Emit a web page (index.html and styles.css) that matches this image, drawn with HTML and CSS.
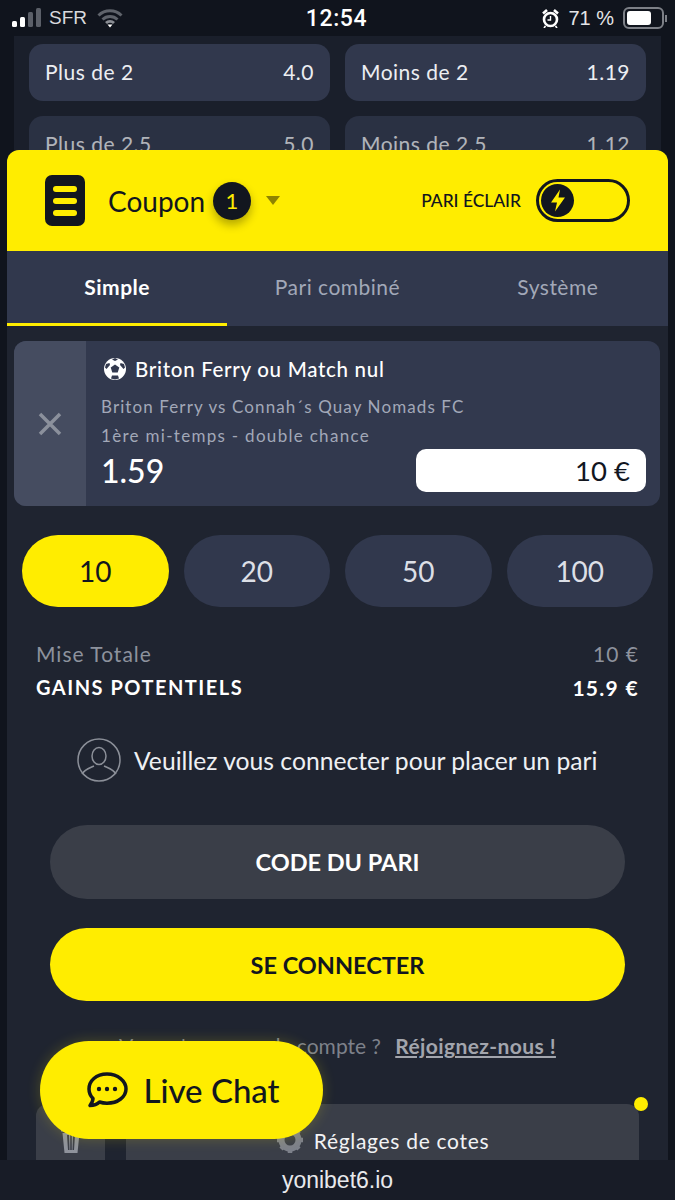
FILE: index.html
```html
<!DOCTYPE html>
<html lang="fr">
    <head>
        <meta charset="utf-8">
        <meta name="viewport" content="width=device-width, initial-scale=1">
        <title>Coupon</title>
        <link rel="stylesheet" href="styles.css">
    </head>
    <body>
        <div class="statusbar">
            <div class="status-left">
                <svg width="32" height="20" viewBox="0 0 32 20">
                    <rect x="2" y="13" width="5" height="6" rx="1.5" fill="#fff"/>
                    <rect x="10" y="9" width="5" height="10" rx="1.5" fill="#fff"/>
                    <rect x="18" y="4" width="5" height="15" rx="1.5" fill="#5b5f68"/>
                    <rect x="26" y="0" width="5" height="19" rx="1.5" fill="#5b5f68"/>
                </svg>
                <span class="carrier">SFR</span>
                <svg class="wifi" width="26" height="20" viewBox="0 0 26 20" fill="none" stroke="#5f636b" stroke-width="3">
                    <path d="M1.5 7.5a16.5 16.5 0 0 1 23 0"/>
                    <path d="M5.5 11.5a11 11 0 0 1 15 0"/>
                    <path d="M9 15a6 6 0 0 1 8 0" stroke="#8a8d94"/>
                    <path d="M10.5 16.5L13 19.5l2.5-3z" fill="#fff" stroke="none"/>
                </svg>
            </div>
            <div class="status-time">12:54</div>
            <div class="status-right">
                <svg width="17" height="19" viewBox="0 0 17 19">
                    <circle cx="8.5" cy="10.5" r="6.5" fill="none" stroke="#fff" stroke-width="2.6"/>
                    <path d="M8.5 7v4H5.5" fill="none" stroke="#fff" stroke-width="1.4"/>
                    <path d="M1 4.5L5 1M16 4.5L12 1" stroke="#fff" stroke-width="2.6"/>
                    <path d="M3.5 17l-1.5 2M13.5 17l1.5 2" stroke="#fff" stroke-width="1.6"/>
                </svg>
                <span class="battery-pct">71 %</span>
                <div class="battery"><div class="battery-fill"></div></div>
                <div class="battery-cap"></div>
            </div>
        </div>

        <div class="page">
            <div class="odds-row">
                <div class="odd"><span>Plus de 2</span><span>4.0</span></div>
                <div class="odd"><span>Moins de 2</span><span>1.19</span></div>
            </div>
            <div class="odds-row dim">
                <div class="odd"><span>Plus de 2.5</span><span>5.0</span></div>
                <div class="odd"><span>Moins de 2.5</span><span>1.12</span></div>
            </div>
        </div>

        <div class="coupon">
            <div class="coupon-head">
                <div class="coupon-icon"><i></i><i></i><i></i></div>
                <div class="coupon-title">Coupon</div>
                <div class="coupon-count">1</div>
                <div class="coupon-caret"></div>
                <div class="flash-label">PARI ÉCLAIR</div>
                <div class="flash-toggle">
                    <div class="flash-knob">
                        <svg width="16" height="25" viewBox="0 0 16 24"><path d="M10 1L1 14h6l-2 9 10-14H8.5z" fill="#ffed00"/></svg>
                    </div>
                </div>
            </div>

            <div class="tabs">
                <div class="tab active">Simple</div>
                <div class="tab">Pari combiné</div>
                <div class="tab">Système</div>
            </div>

            <div class="bet">
                <div class="bet-close">
                    <svg width="26" height="26" viewBox="0 0 26 26"><path d="M3 3l20 20M23 3L3 23" stroke="#8b909c" stroke-width="3.5"/></svg>
                </div>
                <div class="bet-body">
                    <div class="bet-title">
                        <svg width="24" height="24" viewBox="0 0 24 24">
                            <circle cx="12" cy="12" r="11" fill="#fff"/>
                            <path d="M12 7.500l4.300 3.100-1.600 5h-5.400l-1.600-5z" fill="#32394e"/>
                            <path d="M9 2.500l3 1.500 3-1.500-3-1.500zM3 7l3.500-1 .5 2-3.500 4-1.500-1.500zM21 7l-3.500-1-.5 2 3.500 4 1.500-1.500zM8 21.500l1-3h6l1 3-4 1z" fill="#32394e"/>
                        </svg>
                        <span>Briton Ferry ou Match nul</span>
                    </div>
                    <div class="bet-match">Briton Ferry vs Connah´s Quay Nomads FC</div>
                    <div class="bet-market">1ère mi-temps - double chance</div>
                    <div class="bet-foot">
                        <div class="bet-odd">1.59</div>
                        <div class="bet-input">10 €</div>
                    </div>
                </div>
            </div>

            <div class="stakes">
                <div class="stake active">10</div>
                <div class="stake">20</div>
                <div class="stake">50</div>
                <div class="stake">100</div>
            </div>

            <div class="total-row"><span>Mise Totale</span><span>10 €</span></div>
            <div class="gain-row"><span>GAINS POTENTIELS</span><span class="gain-value">15.9 €</span></div>

            <div class="login-note">
                <svg width="44" height="44" viewBox="0 0 44 44" fill="none" stroke="#8b8f98" stroke-width="1.5">
                    <circle cx="22" cy="22" r="21"/>
                    <ellipse cx="22" cy="18" rx="7" ry="8.5"/>
                    <path d="M5 36c3-5 8-6 12-8M39 36c-3-5-8-6-12-8"/>
                </svg>
                <span>Veuillez vous connecter pour placer un pari</span>
            </div>

            <div class="btn btn-code">CODE DU PARI</div>
            <div class="btn btn-login">SE CONNECTER</div>

            <div class="join">Vous n'avez pas de compte ? <a href="#">Réjoignez-nous !</a></div>

            <div class="tools">
                <div class="tool-trash">
                    <svg width="22" height="30" viewBox="0 0 22 30" fill="#8f939c">
                        <path d="M1 6h20v2.5H1zM7 3h8v3H7zM2.500 10h17L17.500 30h-13zM7 12l1 15h1.500l-.5-15zM10.200 12v15h1.600V12zM15 12h-2l-.5 15H14z" fill-rule="evenodd"/>
                    </svg>
                </div>
                <div class="tool-settings">
                    <svg width="28" height="28" viewBox="0 0 28 28">
                        <circle cx="14" cy="14" r="8.5" fill="none" stroke="#7d818a" stroke-width="6"/>
                        <path d="M14 14L14 1M14 14V27M14 14H1M14 14H27M14 14L5 5M14 14L23 5M14 14L5 23M14 14L23 23" stroke="#7d818a" stroke-width="4.5" stroke-dasharray="0 9 5 99"/>
                    </svg>
                    <span>Réglages de cotes</span>
                </div>
            </div>
        </div>

        <div class="notify-dot"></div>

        <div class="live-chat">
            <svg width="42" height="36" viewBox="0 0 42 36">
                <path d="M21 2C10 2 3 9 3 17c0 4 1.500 7 4 9.500 0 2.500-1.500 5-3 7 3.500 0 7-1 9.500-3.500 2.200 .8 4.800 1.200 7.500 1.200 11 0 19-6.500 19-14.200S32 2 21 2z" fill="none" stroke="#12161f" stroke-width="3.5" stroke-linejoin="round"/>
                <circle cx="13" cy="17" r="2.200" fill="#12161f"/>
                <circle cx="21" cy="17" r="2.200" fill="#12161f"/>
                <circle cx="29" cy="17" r="2.200" fill="#12161f"/>
            </svg>
            <span>Live Chat</span>
        </div>

        <div class="urlbar">yonibet6.io</div>
    </body>
</html>
```

FILE: styles.css
```css
html,
body {
    margin: 0;
    height: 1200px;
    overflow: hidden;
}

body {
    position: relative;
    font-family: "Lato", "Noto Sans", sans-serif;
    background-color: #10141d;
    color: #fff;
}

.statusbar {
    height: 36px;
    display: flex;
    align-items: center;
    justify-content: space-between;
    padding: 0 8px 0 10px;
    box-sizing: border-box;
    font-family: "Liberation Sans", sans-serif;
}

.status-left,
.status-right {
    display: flex;
    align-items: center;
    width: 200px;
}

.status-right {
    justify-content: flex-end;
}

.carrier {
    font-size: 19px;
    color: #d8d9dc;
    margin-left: 7px;
    margin-right: 10px;
}

.status-time {
    font-family: "Roboto", sans-serif;
    font-size: 23px;
    font-weight: 500;
    letter-spacing: .6px;
    margin-left: -4px;
}

.battery-pct {
    font-size: 20px;
    margin: 0 9px 0 9px;
    color: #e4e5e7;
}

.battery {
    border: 2px solid #7d8087;
    border-radius: 6px;
    padding: 2px;
    width: 33px;
    height: 14px;
}

.battery-fill {
    width: 24px;
    height: 14px;
    background-color: #fff;
    border-radius: 3px;
}

.battery-cap {
    width: 2px;
    height: 7px;
    background-color: #7d8087;
    margin-left: 1px;
}

.page {
    margin: 0 14px;
    height: 1124px;
    background-color: #1a1f2b;
    padding: 8px 15px 0;
    box-sizing: border-box;
}

.odds-row {
    display: flex;
    gap: 15px;
    margin-bottom: 15px;
}

.odds-row.dim {
    opacity: .72;
}

.odd {
    flex: 1;
    height: 57px;
    border-radius: 14px;
    background-color: #31384d;
    display: flex;
    align-items: center;
    justify-content: space-between;
    padding: 0 16px 2px;
    box-sizing: border-box;
    font-size: 21px;
    letter-spacing: .5px;
    color: #eceef2;
}

.coupon {
    position: absolute;
    left: 7px;
    top: 150px;
    width: 661px;
    height: 1010px;
    background-color: #1f2430;
    border-radius: 12px 12px 0 0;
    overflow: hidden;
}

.coupon-head {
    height: 101px;
    background-color: #ffed00;
    display: flex;
    align-items: center;
    color: #12161f;
    padding: 0 38px;
    box-sizing: border-box;
}

.coupon-icon {
    width: 40px;
    height: 51px;
    background-color: #12161f;
    border-radius: 7px;
    display: flex;
    flex-direction: column;
    align-items: center;
    justify-content: center;
    gap: 6px;
    flex: none;
}

.coupon-icon i {
    display: block;
    width: 24px;
    height: 6px;
    border-radius: 3px;
    background-color: #ffed00;
}

.coupon-title {
    font-size: 28px;
    margin-left: 23px;
    width: 105px;
    flex: none;
}

.coupon-count {
    width: 38px;
    height: 38px;
    border-radius: 50%;
    background-color: #12161f;
    color: #ffed00;
    font-size: 22px;
    display: flex;
    align-items: center;
    justify-content: center;
    box-shadow: 0 5px 10px rgba(0, 0, 0, .3);
    flex: none;
}

.coupon-caret {
    width: 0;
    height: 0;
    border-left: 7px solid transparent;
    border-right: 7px solid transparent;
    border-top: 9px solid #8e8300;
    margin-left: 15px;
    flex: none;
}

.flash-label {
    margin-left: auto;
    font-size: 17.4px;
    font-weight: 500;
}

.flash-toggle {
    width: 94px;
    height: 43px;
    border: 3px solid #12161f;
    border-radius: 24px;
    margin-left: 15px;
    box-sizing: border-box;
    padding: 2px;
    flex: none;
}

.flash-knob {
    width: 33px;
    height: 33px;
    border-radius: 50%;
    background-color: #12161f;
    display: flex;
    align-items: center;
    justify-content: center;
}

.tabs {
    display: flex;
    height: 75px;
    background-color: #31384d;
}

.tab {
    flex: 1;
    display: flex;
    align-items: center;
    justify-content: center;
    font-size: 21px;
    letter-spacing: .5px;
    color: #a2a8b8;
    box-sizing: border-box;
    padding-bottom: 2px;
    border-bottom: 3px solid transparent;
}

.tab.active {
    color: #fff;
    font-weight: 700;
    border-bottom-color: #ffed00;
}

.bet {
    display: flex;
    height: 165px;
    margin: 15px 8px 0 7px;
    border-radius: 12px;
    background-color: #32394e;
    overflow: hidden;
}

.bet-close {
    width: 72px;
    background-color: #454c60;
    display: flex;
    align-items: center;
    justify-content: center;
    flex: none;
}

.bet-body {
    flex: 1;
    padding: 16px 14px 14px 15px;
    box-sizing: border-box;
    display: flex;
    flex-direction: column;
}

.bet-title {
    display: flex;
    align-items: center;
    gap: 8px;
    font-size: 20.5px;
    letter-spacing: .7px;
    font-weight: 500;
    margin-left: 2px;
}

.bet-match,
.bet-market {
    font-size: 17px;
    letter-spacing: 1.1px;
    color: #a2a8b8;
    margin-top: 8px;
}

.bet-market {
    letter-spacing: 1.3px;
}

.bet-match {
    margin-top: 15px;
}

.bet-foot {
    display: flex;
    justify-content: space-between;
    align-items: center;
    margin-top: 3px;
}

.bet-odd {
    font-size: 32px;
    font-weight: 500;
}

.bet-input {
    width: 230px;
    height: 43px;
    background-color: #fff;
    border-radius: 10px;
    color: #12161f;
    font-size: 27.5px;
    text-align: right;
    line-height: 43px;
    padding-right: 16px;
    box-sizing: border-box;
}

.stakes {
    display: flex;
    gap: 15px;
    margin: 29px 15px 0;
}

.stake {
    flex: 1;
    height: 72px;
    border-radius: 36px;
    background-color: #31384d;
    display: flex;
    align-items: center;
    justify-content: center;
    font-size: 28px;
    color: #dcdfe6;
}

.stake.active {
    background-color: #ffed00;
    color: #12161f;
}

.total-row,
.gain-row {
    display: flex;
    justify-content: space-between;
    margin: 0 29px;
}

.total-row {
    margin-top: 33px;
    font-size: 21px;
    letter-spacing: 1px;
    color: #8d929d;
    line-height: 28px;
}

.gain-row {
    margin-top: 5px;
    font-size: 20px;
    letter-spacing: 1.5px;
    font-weight: 700;
    line-height: 28px;
}

.gain-value {
    font-size: 21px;
    letter-spacing: 1.3px;
    margin-top: 1px;
}

.login-note {
    display: flex;
    align-items: center;
    gap: 13px;
    margin: 36px 0 0 70px;
    font-size: 24.7px;
    color: #eef0f3;
}

.btn {
    margin: 0 43px;
    height: 74px;
    border-radius: 37px;
    display: flex;
    align-items: center;
    justify-content: center;
    font-size: 23.5px;
    font-weight: 700;
}

.btn-code {
    margin-top: 43px;
    background-color: #3a3e48;
}

.btn-login {
    margin-top: 29px;
    height: 73px;
    background-color: #ffed00;
    color: #12161f;
}

.join {
    margin-top: 32px;
    text-align: center;
    font-size: 21px;
    color: #7d818a;
}

.join a {
    color: #a2a5ad;
    font-weight: 700;
    letter-spacing: .4px;
    text-decoration: underline;
    margin-left: 9px;
}

.tools {
    display: flex;
    gap: 21px;
    margin: 46px 29px 0;
    height: 60px;
}

.tool-trash {
    width: 69px;
    background-color: #3a3e48;
    border-radius: 12px 12px 0 0;
    display: flex;
    justify-content: center;
    padding-top: 19px;
    box-sizing: border-box;
}

.tool-settings {
    flex: 1;
    background-color: #3a3e48;
    border-radius: 12px 12px 0 0;
    display: flex;
    align-items: center;
    justify-content: center;
    gap: 10px;
    font-size: 21px;
    letter-spacing: .7px;
    padding: 12px 0 0;
    box-sizing: border-box;
    color: #f2f3f5;
}

.notify-dot {
    position: absolute;
    left: 634px;
    top: 1097px;
    width: 14px;
    height: 14px;
    border-radius: 50%;
    background-color: #ffed00;
}

.live-chat {
    position: absolute;
    left: 40px;
    top: 1041px;
    width: 283px;
    height: 98px;
    border-radius: 49px;
    background-color: #ffed00;
    box-shadow: 0 0 14px rgba(255, 237, 0, .2);
    display: flex;
    align-items: center;
    justify-content: center;
    gap: 15px;
    padding-left: 3px;
    box-sizing: border-box;
    font-size: 33px;
    font-weight: 500;
    color: #12161f;
}

.urlbar {
    position: absolute;
    left: 0;
    right: 0;
    bottom: 0;
    height: 40px;
    background-color: #181c27;
    text-align: center;
    line-height: 41px;
    font-family: "Liberation Sans", sans-serif;
    font-size: 23px;
    color: #e8e9ec;
}
```
